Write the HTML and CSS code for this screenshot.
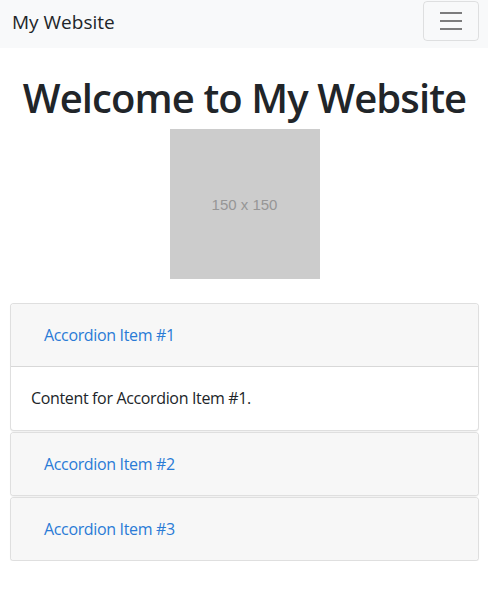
FILE: index.html
```html
<!DOCTYPE html>
<html lang="en">
<head>
<meta charset="utf-8">
<title>My Website</title>
<link rel="stylesheet" href="styles.css">
</head>
<body>
  <nav class="navbar">
    <a class="brand" href="#">My Website</a>
    <button class="toggler" type="button" aria-label="Toggle navigation">
      <svg class="toggler-icon" width="30" height="30" viewBox="0 0 30 30" aria-hidden="true">
        <path d="M4 7h22M4 15h22M4 23h22" stroke="rgba(0,0,0,0.5)" stroke-width="2" stroke-linecap="butt" fill="none"/>
      </svg>
    </button>
  </nav>

  <main class="page">
    <h1 class="title">Welcome to My Website</h1>
    <div class="placeholder">150 x 150</div>

    <section class="accordion">
      <div class="card">
        <div class="card-header open">
          <button class="card-toggle" type="button">Accordion Item #1</button>
        </div>
        <div class="card-body">Content for Accordion Item #1.</div>
      </div>
      <div class="card">
        <div class="card-header">
          <button class="card-toggle" type="button">Accordion Item #2</button>
        </div>
      </div>
      <div class="card">
        <div class="card-header">
          <button class="card-toggle" type="button">Accordion Item #3</button>
        </div>
      </div>
    </section>
  </main>
</body>
</html>
```

FILE: styles.css
```css
* {
  box-sizing: border-box;
}

body {
  margin: 0;
  font-family: "Open Sans", "Noto Sans", sans-serif;
  font-size: 16px;
  line-height: 1.5;
  color: #212529;
  background: #fff;
}

/* top bar */
.navbar {
  height: 48px;
  background: #f8f9fa;
  display: flex;
  align-items: flex-start;
  justify-content: space-between;
  padding: 0 9px 0 12px;
}

.brand {
  font-size: 19px;
  line-height: 1;
  padding-top: 13px;
  color: #212529;
  text-decoration: none;
}

.toggler {
  margin-top: 1px;
  width: 56px;
  height: 40px;
  padding: 0;
  display: flex;
  align-items: center;
  justify-content: center;
  background: transparent;
  border: 1px solid rgba(0, 0, 0, 0.1);
  border-radius: 4px;
}

.toggler-icon {
  display: block;
}

/* main column */
.page {
  padding: 26px 9px 0 10px;
  display: flex;
  flex-direction: column;
  align-items: center;
}

.title {
  margin: 0 0 7px;
  font-size: 40px;
  line-height: 48px;
  font-weight: 600;
  letter-spacing: -0.9px;
  text-align: center;
  white-space: nowrap;
}

.placeholder {
  width: 150px;
  height: 150px;
  padding-top: 2px;
  background: #cccccc;
  color: #969696;
  font-family: "Liberation Sans", Arial, sans-serif;
  font-size: 15px;
  display: flex;
  align-items: center;
  justify-content: center;
}

/* accordion */
.accordion {
  align-self: stretch;
  margin-top: 24px;
  display: flex;
  flex-direction: column;
  gap: 1px;
  letter-spacing: -0.35px;
}

.card {
  border: 1px solid rgba(0, 0, 0, 0.125);
  border-radius: 4px;
  overflow: hidden;
  background: #fff;
  box-shadow: 0 1px 1px rgba(0, 0, 0, 0.06);
}

.card-header {
  background: #f7f7f7;
  padding: 12px 20px;
}

.card-header.open {
  border-bottom: 1px solid rgba(0, 0, 0, 0.125);
}

.card-toggle {
  display: block;
  height: 38px;
  padding: 6px 12px;
  border: 1px solid transparent;
  background: none;
  font: inherit;
  letter-spacing: inherit;
  color: #2a7bd6;
  cursor: pointer;
}

.card-body {
  padding: 19px 20px 20px;
  line-height: 24px;
}
```
